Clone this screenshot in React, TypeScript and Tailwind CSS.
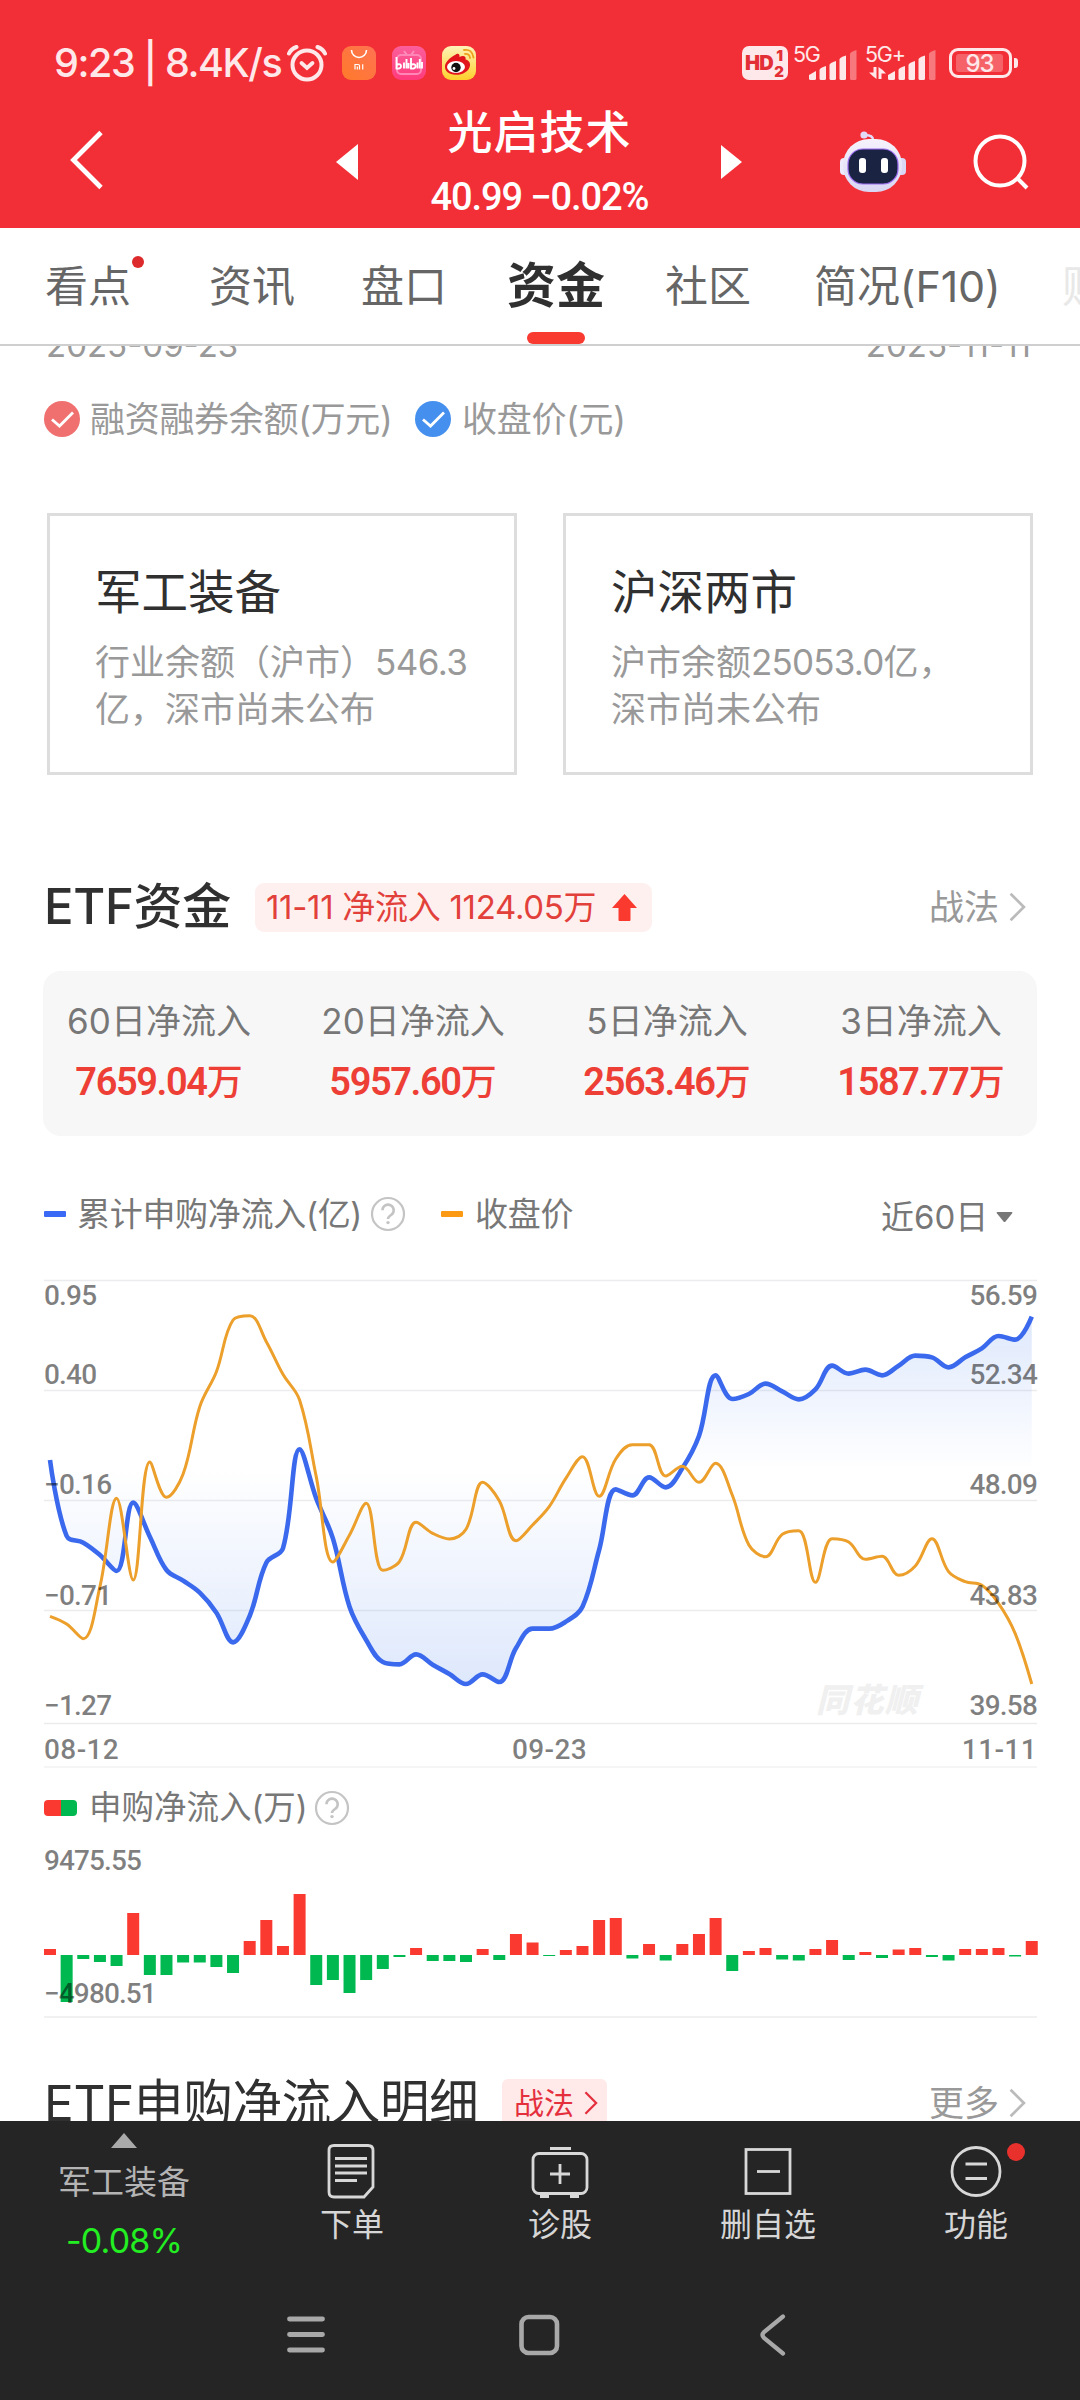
import React from "react";

const CLOSE_COLOR = "#ec9f2a";
const FLOW_COLOR = "#3a69ee";

// y positions (in thirds of a pixel, from the chart top) for the last 60 trading days
const flow = [
  600, 828, 848, 885, 933, 728, 830, 930, 962, 998, 1058, 1147, 1068, 908, 865,
  568, 715, 835, 1040, 1140, 1206, 1213, 1183, 1214, 1242, 1272, 1243, 1266,
  1165, 1106, 1106, 1085, 1040, 870, 688, 706, 652, 682, 625, 528, 346, 417,
  402, 371, 394, 418, 388, 317, 341, 329, 346, 317, 287, 292, 322, 292, 265,
  228, 239, 170,
];

const close = [
  1069, 1092, 1136, 980, 715, 960, 606, 712, 642, 440, 335, 180, 167, 245, 343,
  420, 650, 906, 825, 730, 931, 905, 787, 820, 837, 808, 667, 722, 842, 795,
  740, 655, 590, 709, 597, 554, 554, 648, 619, 667, 610, 705, 855, 890, 823,
  812, 967, 836, 846, 898, 889, 946, 918, 836, 935, 965, 976, 1030, 1120, 1272,
];

const bars = [
  6, -47, -4, -7, -11, 42, -20, -20, -7.5, -7.5, -12, -18, 14, 35, 9, 61, -30,
  -25, -38, -25, -14, -2, 7, -6, -6, -7, 6, -5, 21, 12.5, -1, 5, 9, 35, 37,
  -3.5, 11, -5.5, 11, 21, 37, -16, 4, 7, -4.5, -5.5, 6, 15, -5, 3, -3, 5.5, 7,
  -2, -5.5, 6, 6, 7, -1.5, 14,
];

type Pt = [number, number];

const toPoints = (ys: number[]): Pt[] =>
  ys.map((y, i) => [50 + i * 16.64, 1260 + y / 3]);

const clamp = (v: number, a: number, b: number) =>
  Math.max(Math.min(a, b), Math.min(Math.max(a, b), v));

// Smooth curve whose control points never leave the box of their segment
function smoothPath(pts: Pt[], smooth = 0.37) {
  let d = `M${pts[0][0]} ${pts[0][1]}`;
  let out: Pt = pts[0];
  for (let i = 1; i < pts.length; i++) {
    const p = pts[i];
    const prev = pts[i - 1];
    const next = pts[i + 1];
    let cpIn: Pt = p;
    let cpOut: Pt = p;
    if (next) {
      const lp = Math.hypot(p[0] - prev[0], p[1] - prev[1]);
      const ln = Math.hypot(next[0] - p[0], next[1] - p[1]);
      const r = ln / (ln + lp);
      cpOut = [0, 1].map((k) =>
        clamp(p[k] + (next[k] - prev[k]) * smooth * r, p[k], next[k])
      ) as Pt;
      cpIn = [0, 1].map((k) =>
        clamp(p[k] - ((cpOut[k] - p[k]) * lp) / ln, prev[k], p[k])
      ) as Pt;
      cpOut = [0, 1].map((k) => p[k] + ((p[k] - cpIn[k]) * ln) / lp) as Pt;
    }
    d += `C${out[0]} ${out[1]} ${cpIn[0]} ${cpIn[1]} ${p[0]} ${p[1]}`;
    out = cpOut;
  }
  return d;
}

const flowPath = smoothPath(toPoints(flow));
const closePath = smoothPath(toPoints(close));

const ChevronRight = ({ className }: { className: string }) => (
  <svg className={className} viewBox="0 0 16 28" fill="none">
    <path d="M1.5 1.5L14 14L1.5 26.5" stroke="currentColor" strokeWidth="2.6" />
  </svg>
);

const Help = () => (
  <svg className="size-[36px] text-[#c4c4c4]" viewBox="0 0 36 36" fill="none">
    <circle cx="18" cy="18" r="16" stroke="currentColor" strokeWidth="2.2" />
    <path
      d="M12.5 14.3a5.6 5.6 0 1 1 8.6 4.7c-2 1.3-3.1 2-3.1 4"
      stroke="currentColor"
      strokeWidth="2.6"
    />
    <circle cx="18" cy="26.6" r="1.7" fill="currentColor" />
  </svg>
);

const Signal = () => (
  <svg className="h-[30px] w-[49px]" viewBox="0 0 49 30" fill="#ffe8e9">
    <path d="M0 25l7-4v7.5q0 1.5-1.5 1.5h-4q-1.5 0-1.5-1.5z" />
    <path d="M10.500 20q0-2 6.500-4v12.500q0 1.500-1.500 1.500h-3.500q-1.500 0-1.500-1.500z" />
    <path d="M20.500 15q0-2 6.500-4v17.500q0 1.500-1.500 1.500h-3.500q-1.500 0-1.500-1.500z" />
    <path d="M30.500 9.500q0-2 6.500-4v23q0 1.500-1.500 1.500h-3.500q-1.500 0-1.500-1.500z" />
    <path
      d="M41 4q0-2 6.500-4v28.500q0 1.500-1.500 1.500h-3.500q-1.500 0-1.500-1.500z"
      fillOpacity=".4"
    />
  </svg>
);

function StatusBar() {
  return (
    <div className="flex h-[34px] items-center pl-[54px] pr-[62px] text-[#ffe8e9]">
      <span className="w-[233px] whitespace-nowrap text-[39.5px] font-medium leading-[36px] tracking-[-1.4px]">
        9:23 | 8.4K/s
      </span>
      <svg className="h-[38px] w-[40px]" viewBox="0 0 40 38" fill="none" stroke="currentColor">
        <circle cx="20" cy="21" r="14.500" strokeWidth="4" />
        <path d="M2 9.500Q4 5 9.500 3M38 9.500Q36 5 30.500 3" strokeWidth="4" strokeLinecap="round" />
        <path d="M14.500 19l5.500 5 5.500-5" strokeWidth="3.800" strokeLinecap="round" />
      </svg>
      <svg className="ml-[15px] size-[34px]" viewBox="0 0 34 34">
        <defs>
          <linearGradient id="mi" x1="0" y1="1" x2="1" y2="0">
            <stop offset="0" stopColor="#ff7a2a" />
            <stop offset="1" stopColor="#ff7352" />
          </linearGradient>
        </defs>
        <rect width="34" height="34" rx="9" fill="url(#mi)" />
        <path d="M9.500 4a7.500 7.500 0 0 0 15 0" fill="none" stroke="#fff" strokeWidth="1.600" />
        <path
          d="M13 23.500v-5h3.200q1.300 0 1.300 1.300v3.700M15.300 20.500v3M20.700 18.200v5.300"
          fill="none"
          stroke="#fff"
          strokeWidth="1.200"
        />
      </svg>
      <svg className="ml-[16px] size-[34px]" viewBox="0 0 34 34">
        <defs>
          <linearGradient id="bl" x1="0" y1="0" x2="0" y2="1">
            <stop offset="0" stopColor="#fb5f9c" />
            <stop offset="1" stopColor="#ff3b7c" />
          </linearGradient>
        </defs>
        <rect width="34" height="34" rx="9" fill="url(#bl)" />
        <path d="M12 5l3 4M22 5l-3 4" stroke="#ff8fbc" strokeWidth="2" />
        <rect x="5" y="9" width="24" height="19" rx="4" fill="none" stroke="#ff86b6" strokeWidth="2" />
        <g fill="none" stroke="#fff" strokeWidth="1.900">
          <path d="M4.500 11v11.500q4.500.5 4.500-2.300t-4-1.700M12 16.500v6M14.500 13v9.500M16.500 17v5.500" />
          <path d="M19 12v10.500q4.500.5 4.500-2.300t-4-1.700M25.500 16.500v6M27.800 13v9.500M30 16v6.500" />
        </g>
      </svg>
      <svg className="ml-[16px] size-[34px]" viewBox="0 0 34 34">
        <defs>
          <linearGradient id="wb" x1="0" y1="0" x2="0" y2="1">
            <stop offset="0" stopColor="#fff3b8" />
            <stop offset="1" stopColor="#ffd02c" />
          </linearGradient>
        </defs>
        <rect width="34" height="34" rx="9" fill="url(#wb)" />
        <path
          d="M13 9c3-2.500 5-1 4.500 2 4-2 7-.5 6 2.500 3 .8 5 3 4.500 6-.8 6-7.500 9.500-14.500 9.300C7 28.600 2.500 25 3 20c.4-4 5-8.500 10-11z"
          fill="#e2141c"
        />
        <ellipse cx="14" cy="21" rx="9" ry="6" fill="#fff" />
        <circle cx="14" cy="21.500" r="4.700" fill="#111" />
        <circle cx="12" cy="22.500" r="1.400" fill="#fff" />
        <g fill="none" stroke="#eda21d" strokeWidth="1.800" strokeLinecap="round">
          <path d="M22 4q8-1.500 9.500 7.500" />
          <path d="M23 8q4.500-.5 5 4" />
        </g>
      </svg>

      <div className="ml-auto flex h-[34px] items-end">
        <div className="relative mr-[6px] h-[34px] w-[46px] rounded-[7px] bg-[#ffe8e9] font-black text-[#e32f36]">
          <span className="absolute left-[3px] top-[7px] text-[20px] leading-[20px] tracking-[-0.8px]">HD</span>
          <span className="absolute right-[5px] top-[2px] text-[15px] leading-[16px]">1</span>
          <span className="absolute right-[4px] bottom-0 text-[15px] leading-[16px]">2</span>
        </div>
        <div className="relative h-[34px] w-[64px]">
          <span className="absolute -left-[1px] top-0 text-[21.5px] leading-[17px] tracking-[-1.2px]">5G</span>
          <div className="absolute bottom-0 left-[15px]">
            <Signal />
          </div>
        </div>
        <div className="relative ml-[8px] h-[34px] w-[72px]">
          <span className="absolute -left-[1px] top-0 text-[21.5px] leading-[17px] tracking-[-1.2px]">5G+</span>
          <svg className="absolute left-[3px] top-[21px] h-[12px] w-[17px]" viewBox="0 0 17 12" fill="currentColor">
            <path d="M4.500 0h3v12Q4 9.500 0 5.500h4.500zM12.500 12h-3V0Q13 2 17 6.500h-4.500z" />
          </svg>
          <div className="absolute bottom-0 left-[22px]">
            <Signal />
          </div>
        </div>
        <div className="mb-[2px] ml-[11px] flex items-center">
          <div className="flex h-[30px] w-[63px] items-center rounded-[9px] border-[3px] border-[#ffe8e9] px-[4px]">
            <span className="h-[18px] w-[47px] rounded-[3px] bg-white/25 text-center text-[24px] font-medium leading-[19px] tracking-[-1px]">
              93
            </span>
          </div>
          <div className="ml-[2px] h-[10px] w-[4px] rounded-r-[3px] bg-[#ffe8e9]" />
        </div>
      </div>
    </div>
  );
}

function Header() {
  return (
    <header className="h-[228px] bg-[#f22f37] pt-[46px] text-white">
      <StatusBar />
      <div className="mt-[6px] flex h-[148px] items-center">
        <svg className="ml-[69px] h-[60px] w-[36px]" viewBox="0 0 36 60" fill="none">
          <path d="M32 2.500L4.500 30L32 57.500" stroke="#fff" strokeWidth="4.800" />
        </svg>
        <svg className="ml-[231px] mt-[3px] h-[36px] w-[22px]" viewBox="0 0 22 36">
          <path d="M22 0v36L0 18z" fill="#fff" />
        </svg>
        <div className="mt-[2px] w-[363px] text-center">
          <h1 className="h-[56px] text-[45px] font-medium leading-[56px] tracking-[1px]">光启技术</h1>
          <p className="mt-[16px] h-[40px] whitespace-nowrap font-['Roboto'] text-[38px] font-medium leading-[40px] tracking-[-1.1px]">
            40.99 −0.02%
          </p>
        </div>
        <svg className="mt-[3px] h-[34px] w-[21px]" viewBox="0 0 21 34">
          <path d="M0 0v34L21 17z" fill="#fff" />
        </svg>
        <svg className="ml-[98px] mt-[3px] h-[62px] w-[66px]" viewBox="0 0 66 62" fill="none">
          <defs>
            <linearGradient id="bot" x1="0" y1="0" x2="0" y2="1">
              <stop offset="0" stopColor="#f6f2fc" />
              <stop offset="1" stopColor="#d9d6f4" />
            </linearGradient>
          </defs>
          <path d="M33 9q0-5-8-5" stroke="#e3daf8" strokeWidth="2.500" />
          <circle cx="24" cy="4" r="3.600" fill="#e3daf8" />
          <rect y="27" width="12" height="17" rx="4" fill="#eceafc" />
          <rect x="54" y="27" width="12" height="17" rx="4" fill="#d9d6f6" />
          <rect x="3" y="8" width="59" height="53" rx="26" fill="url(#bot)" />
          <rect x="8" y="18" width="50" height="35" rx="15" fill="#1a2442" stroke="#9a6af0" strokeWidth="1.200" />
          <rect x="19" y="27" width="7" height="15" rx="3" fill="#fff" />
          <rect x="41" y="27" width="7" height="15" rx="3" fill="#fff" />
        </svg>
        <svg className="ml-[67px] mt-[3px] size-[56px]" viewBox="0 0 56 56" fill="none" stroke="#fff" strokeWidth="4">
          <circle cx="27" cy="27" r="24.500" />
          <path d="M44 44L54 54" />
        </svg>
      </div>
    </header>
  );
}

function Tabs() {
  return (
    <nav className="relative flex h-[118px] items-center overflow-hidden border-b-2 border-[#cfcfcf] pl-[45px] text-[43px] leading-[60px] text-[#666] whitespace-nowrap">
      <span className="relative w-[164px] shrink-0">
        看点
        <i className="absolute left-[87px] top-0 size-[12px] rounded-full bg-[#dd2a2c]" />
      </span>
      <span className="w-[152px] shrink-0">资讯</span>
      <span className="w-[146px] shrink-0">盘口</span>
      <span className="w-[158px] shrink-0 text-[49px] font-bold text-[#303030]">资金</span>
      <span className="w-[149px] shrink-0">社区</span>
      <span className="w-[248px] shrink-0 tracking-[-0.1px]">简况(F10)</span>
      <span className="w-[18px] shrink-0 overflow-hidden text-[#e8e8e8]">财</span>
      <i className="absolute bottom-0 left-[527px] h-[12px] w-[58px] rounded-full bg-[#f93a31]" />
    </nav>
  );
}

const Check = ({ className }: { className: string }) => (
  <svg className={`size-[36px] ${className}`} viewBox="0 0 36 36" fill="none">
    <circle cx="18" cy="18" r="18" fill="currentColor" />
    <path d="M8 18.500L15.500 25L29 11.500" stroke="#fff" strokeWidth="2.800" />
  </svg>
);

function MarginCard({ title, children }: { title: string; children: React.ReactNode }) {
  return (
    <div className="h-[262px] w-[470px] border-[3px] border-[#ddd] pl-[45px] pt-[46px]">
      <h3 className="text-[46.5px] leading-[60px] text-[#303030]">{title}</h3>
      <p className="mt-[17px] whitespace-nowrap text-[35px] leading-[47px] text-[#999]">{children}</p>
    </div>
  );
}

const periods = [
  { label: "60日净流入", value: "7659.04" },
  { label: "20日净流入", value: "5957.60" },
  { label: "5日净流入", value: "2563.46" },
  { label: "3日净流入", value: "1587.77" },
];

const axis = [
  { y: 1305, left: "0.95", right: "56.59" },
  { y: 1384, left: "0.40", right: "52.34" },
  { y: 1494, left: "−0.16", right: "48.09" },
  { y: 1604.5, left: "−0.71", right: "43.83" },
  { y: 1714.5, left: "−1.27", right: "39.58" },
];

function TrendChart() {
  return (
    <svg
      className="block h-[500px] w-full font-['Roboto'] text-[28px] font-medium"
      viewBox="0 1270 1080 500"
      fill="none"
    >
      <defs>
        <linearGradient id="area" gradientUnits="userSpaceOnUse" x1="0" y1="1317" x2="0" y2="1685">
          <stop offset="0" stopColor="#3c78ee" stopOpacity=".17" />
          <stop offset=".415" stopColor="#3c78ee" stopOpacity="0" />
          <stop offset="1" stopColor="#3c78ee" stopOpacity=".17" />
        </linearGradient>
      </defs>
      {[1280.5, 1390.5, 1500.5, 1610.5, 1723.5].map((y) => (
        <path key={y} d={`M44 ${y}H1037`} stroke="#ececee" strokeWidth="1.5" />
      ))}
      <path d="M44 1767H1037" stroke="#f5f5f5" strokeWidth="2" />
      <text
        x="816"
        y="1712"
        fill="#f0f0f0"
        fontSize="33"
        fontWeight="900"
        fontStyle="italic"
        fontFamily="'Noto Sans CJK SC', sans-serif"
        textLength="102"
      >
        同花顺
      </text>
      <path d={`${flowPath}V1469.5H50Z`} fill="url(#area)" />
      <path d={flowPath} stroke={FLOW_COLOR} strokeWidth="4.6" />
      <path d={closePath} stroke={CLOSE_COLOR} strokeWidth="3" />
      <g fill="#000" fillOpacity=".5" letterSpacing="-0.8">
        {axis.map((a) => (
          <React.Fragment key={a.y}>
            <text x="44" y={a.y}>{a.left}</text>
            <text x="1037" y={a.y} textAnchor="end">{a.right}</text>
          </React.Fragment>
        ))}
      </g>
      <g fill="#000" fillOpacity=".5" letterSpacing="0.4">
        <text x="44" y="1759">08-12</text>
        <text x="549.5" y="1759" textAnchor="middle">09-23</text>
        <text x="1037" y="1759" textAnchor="end">11-11</text>
      </g>
    </svg>
  );
}

function BarChart() {
  return (
    <svg
      className="block h-[180px] w-full font-['Roboto'] text-[28px] font-medium"
      viewBox="0 1840 1080 180"
    >
      {bars.map((v, i) => (
        <rect
          key={i}
          x={44 + i * 16.64}
          y={v > 0 ? 1955 - v : 1955}
          width="12"
          height={Math.abs(v)}
          fill={v > 0 ? "#fa3a30" : "#00b850"}
        />
      ))}
      <path d="M44 2017H1037" stroke="#ececec" strokeWidth="1.5" />
      <g fill="#000" fillOpacity=".5" letterSpacing="-0.9">
        <text x="44" y="1870">9475.55</text>
        <text x="44" y="2003">−4980.51</text>
      </g>
    </svg>
  );
}

function BottomItem({
  label,
  dot,
  children,
}: {
  label: string;
  dot?: boolean;
  children: React.ReactNode;
}) {
  return (
    <div className="relative flex w-[208px] shrink-0 flex-col items-center pt-[20px]">
      <svg className="h-[60px] w-[60px]" viewBox="0 0 60 60" fill="none" stroke="#d8d8d8" strokeWidth="2.8">
        {children}
      </svg>
      <span className="mt-[4px] text-[32px] leading-[40px] text-[#d6d6d6]">{label}</span>
      {dot && <i className="absolute left-[135px] top-[22px] size-[18px] rounded-full bg-[#e8302c]" />}
    </div>
  );
}

function BottomBar() {
  return (
    <footer className="h-[279px] bg-[#252525]">
      <div className="flex h-[154px]">
        <div className="flex w-[248px] shrink-0 flex-col items-center pt-[12px]">
          <svg className="h-[15px] w-[26px]" viewBox="0 0 26 15">
            <path d="M13 0L26 15H0z" fill="#aaa" />
          </svg>
          <span className="mt-[12px] text-[33px] leading-[44px] text-[#b4b4b4]">军工装备</span>
          <span className="mt-[15px] text-[34px] leading-[44px] tracking-[-0.8px] text-[#22ee22]">-0.08%</span>
        </div>
        <BottomItem label="下单">
          <path d="M12 4.500H46Q51 4.500 51 9.500V46L42 56H12Q7 56 7 51V9.500Q7 4.500 12 4.500Z" />
          <path d="M13 17.500H45M13 25H45M13 32H45M13 39.500H35" />
        </BottomItem>
        <BottomItem label="诊股">
          <rect x="3" y="12.500" width="54" height="40" rx="6" />
          <path d="M20 7.500H41M10 55.500H19M40 55.500H49M30 23V43M20 33H40" />
        </BottomItem>
        <BottomItem label="删自选">
          <rect x="8" y="8.500" width="44" height="44" />
          <path d="M19 30.500H42" />
        </BottomItem>
        <BottomItem label="功能" dot>
          <circle cx="30" cy="30.500" r="24" />
          <path d="M19.500 23H41M19.500 37.500H41" />
        </BottomItem>
      </div>
      <div className="flex h-[120px] items-center text-[#a8a8a8]">
        <svg className="ml-[286px] h-[42px] w-[40px]" viewBox="0 0 40 42" stroke="currentColor" strokeWidth="4.8" strokeLinecap="round">
          <path d="M3.500 5H36.500M3.500 20.500H36.500M3.500 36H36.500" />
        </svg>
        <svg className="ml-[192px] h-[42px] w-[42px]" viewBox="0 0 42 42" fill="none" stroke="currentColor" strokeWidth="4.6">
          <rect x="3.5" y="3" width="35.5" height="36" rx="7" />
        </svg>
        <svg className="ml-[198px] h-[42px] w-[30px]" viewBox="0 0 30 42" fill="none" stroke="currentColor" strokeWidth="4.2" strokeLinecap="round">
          <path d="M25 2.500L6 18Q3 21 6 24L25 39.500" />
        </svg>
      </div>
    </footer>
  );
}

export default function App() {
  return (
    <div className="flex h-[2400px] w-[1080px] flex-col overflow-hidden bg-white font-['Inter','Noto_Sans_CJK_SC',sans-serif]">
      <Header />
      <Tabs />

      <main className="h-[1775px] overflow-hidden">
        <div className="flex h-[20px] items-end justify-between pl-[46px] pr-[49px] text-[33px] leading-[42px] text-[#999]">
          <span>2025-09-23</span>
          <span>2025-11-11</span>
        </div>

        <div className="mt-[29px] flex h-[48px] items-center pl-[44px] text-[35px] leading-[48px] tracking-[-0.3px] text-[#999]">
          <Check className="text-[#f07070]" />
          <span className="ml-[10px] w-[325px] whitespace-nowrap">融资融券余额(万元)</span>
          <Check className="text-[#4590ee]" />
          <span className="ml-[11px]">收盘价(元)</span>
        </div>

        <div className="mt-[70px] flex justify-between px-[47px]">
          <MarginCard title="军工装备">
            行业余额（沪市）<span className="tracking-[-0.6px]">546.3</span>
            <br />
            亿，深市尚未公布
          </MarginCard>
          <MarginCard title="沪深两市">
            沪市余额<span className="tracking-[-0.8px]">25053.0</span>亿，
            <br />
            深市尚未公布
          </MarginCard>
        </div>

        {/* ETF flow */}
        <div className="mt-[97px] flex h-[70px] items-center pl-[44px]">
          <h2 className="w-[211px] whitespace-nowrap text-[49px] font-medium leading-[70px] tracking-[-0.3px] text-[#303030]">
            ETF资金
          </h2>
          <div className="flex h-[49px] w-[397px] items-center rounded-[9px] bg-[#fff0f0] pl-[11px] text-[33px] leading-[49px] whitespace-nowrap text-[#e2413b]">
            <span className="w-[346px] tracking-[-0.3px]">11-11 净流入 1124.05万</span>
            <svg className="h-[27px] w-[25px]" viewBox="0 0 25 27" fill="#fa3a2f">
              <path d="M12.500 0L25 14H18.500V26q0 1-1 1H7.500q-1 0-1-1V14H0z" />
            </svg>
          </div>
          <span className="ml-[277px] text-[35px] text-[#999]">战法</span>
          <ChevronRight className="ml-[10px] h-[30px] w-[17px] text-[#bbb]" />
        </div>

        <div className="mx-[43px] mt-[29px] flex h-[165px] justify-center rounded-[18px] bg-[#f7f7f7]">
          {periods.map((p) => (
            <div key={p.label} className="w-[254px] shrink-0 pt-[25px] text-center">
              <p className="whitespace-nowrap text-[35px] leading-[50px] text-[#777]">{p.label}</p>
              <p className="mt-[11px] whitespace-nowrap font-['Roboto','Noto_Sans_CJK_SC',sans-serif] text-[36px] font-medium leading-[50px] text-[#ee3f36]">
                <span className="text-[38px] font-semibold tracking-[-1.4px]">{p.value}</span>万
              </p>
            </div>
          ))}
        </div>

        <div className="mt-[53px] flex h-[50px] items-center pl-[44px] text-[33px] leading-[50px] whitespace-nowrap text-[#777]">
          <i className="h-[6px] w-[22px] rounded-[1px] bg-[#3a69f5]" />
          <span className="ml-[11px] w-[293px] tracking-[-0.3px]">累计申购净流入(亿)</span>
          <Help />
          <i className="ml-[35px] h-[6px] w-[22px] rounded-[1px] bg-[#fc9a14]" />
          <span className="ml-[12px] w-[406px] tracking-[-0.3px]">收盘价</span>
          <span className="mt-[5px] w-[115px]">近60日</span>
          <svg className="mt-[5px] h-[10px] w-[17px]" viewBox="0 0 17 10" fill="#777">
            <path d="M1.500 0H15.500Q17 0 16 1.500L9.500 9.500Q8.500 10.500 7.500 9.500L1 1.500Q0 0 1.500 0z" />
          </svg>
        </div>

        <div className="mt-[31px]">
          <TrendChart />
        </div>

        <div className="mt-[13px] flex h-[50px] items-center pl-[44px] text-[32.5px] leading-[50px] text-[#777]">
          <i className="h-[16px] w-[17px] rounded-l-[4px] bg-[#fa3a30]" />
          <i className="h-[16px] w-[16px] rounded-r-[4px] bg-[#00b850]" />
          <span className="ml-[12px] w-[225px] whitespace-nowrap">申购净流入(万)</span>
          <Help />
        </div>

        <div className="mt-[7px]">
          <BarChart />
        </div>

        <div className="mt-[48px] flex h-[70px] items-center pl-[44px] whitespace-nowrap">
          <h2 className="w-[458px] text-[49.5px] leading-[70px] tracking-[-0.3px] text-[#303030]">
            ETF申购净流入明细
          </h2>
          <div className="flex h-[49px] w-[105px] items-center rounded-[6px] bg-[#ffe9e9] pl-[12px] text-[30px] leading-[49px] text-[#e42f3d]">
            战法
            <ChevronRight className="ml-[10px] h-[24px] w-[14px]" />
          </div>
          <span className="ml-[322px] text-[35px] text-[#999]">更多</span>
          <ChevronRight className="ml-[10px] h-[30px] w-[17px] text-[#bbb]" />
        </div>
      </main>

      <BottomBar />
    </div>
  );
}
